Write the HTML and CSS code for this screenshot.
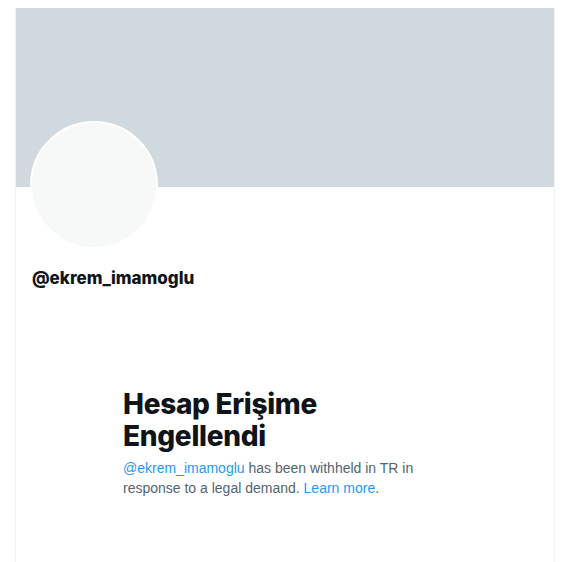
FILE: index.html
```html
<!DOCTYPE html>
<html lang="tr">
<head>
    <meta charset="UTF-8">
    <title>@ekrem_imamoglu</title>
    <link rel="stylesheet" href="styles.css">
</head>
<body>
<div class="column">
    <div class="banner"></div>
    <div class="profile">
        <div class="avatar"></div>
        <div class="handle">@ekrem_imamoglu</div>
    </div>
    <div class="withheld">
        <h1>Hesap Erişime Engellendi</h1>
        <p><a href="#">@ekrem_imamoglu</a> has been withheld in TR in response to a legal demand. <a href="#">Learn more</a>.</p>
    </div>
</div>
</body>
</html>
```

FILE: styles.css
```css
body { margin: 0; background: #fff; font-family: Inter, "Noto Sans", sans-serif; color: #0f1419; }
.column { width: 538px; margin: 8px 0 0 15px; border-left: 1px solid #eff3f4; border-right: 1px solid #eff3f4; min-height: 560px; }
.banner { height: 179px; background: #cfd9de; }
.profile { padding: 0 16px; }
.avatar { width: 124px; height: 124px; margin-top: -66px; margin-left: -2px; border-radius: 50%; border: 2px solid #fff; background: #f7f9f9; }
.handle { margin-top: 18px; font-size: 17px; font-weight: 800; line-height: 22px; }
.withheld { width: 300px; margin: 99px 0 0 107px; }
h1 { margin: 0; font-size: 28px; line-height: 32px; font-weight: 800; letter-spacing: -0.3px; }
p { margin: 6px 0 0; font-family: "Liberation Sans", Arial, sans-serif; font-size: 14px; line-height: 20px; color: #536471; }
a { color: #1d9bf0; text-decoration: none; }
```
